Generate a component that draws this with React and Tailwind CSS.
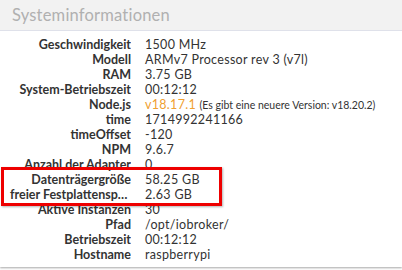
import React from 'react';

const rows = [
  ['Geschwindigkeit', '1500 MHz'],
  ['Modell', 'ARMv7 Processor rev 3 (v7l)'],
  ['RAM', '3.75 GB'],
  ['System-Betriebszeit', '00:12:12'],
  ['Node.js', 'node'],
  ['time', '1714992241166'],
  ['timeOffset', '-120'],
  ['NPM', '9.6.7'],
  ['Anzahl der Adapter', '0'],
  ['Datenträgergröße', '58.25 GB'],
  ['freier Festplattenspeicher', '2.63 GB'],
  ['Aktive Instanzen', '30'],
  ['Pfad', '/opt/iobroker/'],
  ['Betriebszeit', '00:12:12'],
  ['Hostname', 'raspberrypi'],
];

const App = () => {
  return (
    <div className="w-[402px] h-[270px] bg-white overflow-hidden" style={{ fontFamily: 'Lato, sans-serif' }}>
      <div className="relative h-[267px] bg-white shadow-[0_1px_2px_rgba(0,0,0,0.35)]">
        <div className="h-[31px] bg-[#f2f2f2] border-b border-[#dfe1ea] px-3 flex items-center">
          <span className="text-[16.5px] text-[#b0b0b0] tracking-[0.2px]">Systeminformationen</span>
        </div>
        <div className="pt-[6px] text-[12.5px] leading-[15px] text-[#333]">
          {rows.map(([label, value]) => (
            <div key={label} className="grid grid-cols-[131px_1fr] gap-[14px] h-[15px]">
              <div className="pl-[10px] text-right font-bold truncate">{label}</div>
              <div className="whitespace-nowrap tracking-[0.3px]">
                {value === 'node' ? (
                  <>
                    <span className="text-[#f0a030]">v18.17.1</span>{' '}
                    <span className="text-[10.5px] tracking-normal">(Es gibt eine neuere Version: v18.20.2)</span>
                  </>
                ) : (
                  value
                )}
              </div>
            </div>
          ))}
        </div>
        {/* highlight annotation */}
        <div className="absolute left-[1px] top-[167px] w-[221px] h-[39px] border-[3px] border-[#ee0000] shadow-[1px_1px_2px_rgba(0,0,0,0.3)]" />
      </div>
    </div>
  );
};

export default App;
